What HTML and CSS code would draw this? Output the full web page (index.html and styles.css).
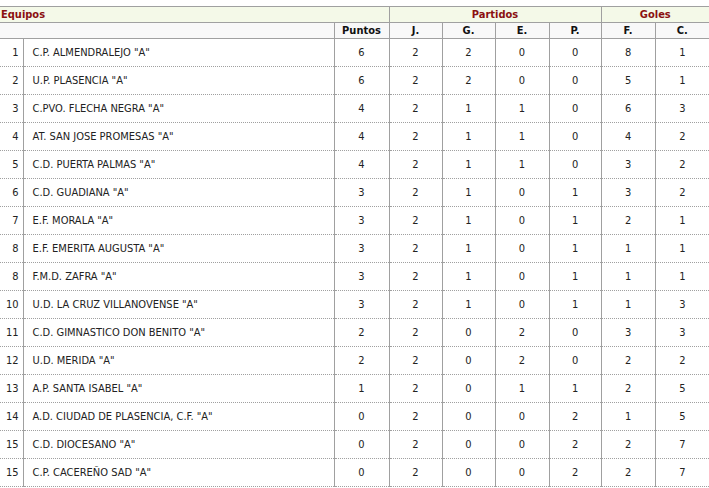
FILE: index.html
```html
<!DOCTYPE html>
<html lang="es">
<head>
<meta charset="utf-8">
<title>Clasificación</title>
<link rel="stylesheet" href="styles.css">
</head>
<body>
<table class="standings">
  <colgroup>
    <col class="c-pos"><col class="c-team"><col class="c-pts">
    <col class="c-j"><col class="c-g"><col class="c-e"><col class="c-p">
    <col class="c-f"><col class="c-c">
  </colgroup>
  <thead>
    <tr class="group-row">
      <th colspan="3" class="group left">Equipos</th>
      <th colspan="4" class="group">Partidos</th>
      <th colspan="2" class="group">Goles</th>
    </tr>
    <tr class="label-row">
      <th colspan="2" class="blank"></th>
      <th>Puntos</th><th>J.</th><th>G.</th><th>E.</th><th>P.</th><th>F.</th><th>C.</th>
    </tr>
  </thead>
  <tbody>
    <tr><td class="pos">1</td><td class="team">C.P. ALMENDRALEJO "A"</td><td>6</td><td>2</td><td>2</td><td>0</td><td>0</td><td>8</td><td>1</td></tr>
    <tr><td class="pos">2</td><td class="team">U.P. PLASENCIA "A"</td><td>6</td><td>2</td><td>2</td><td>0</td><td>0</td><td>5</td><td>1</td></tr>
    <tr><td class="pos">3</td><td class="team">C.PVO. FLECHA NEGRA "A"</td><td>4</td><td>2</td><td>1</td><td>1</td><td>0</td><td>6</td><td>3</td></tr>
    <tr><td class="pos">4</td><td class="team">AT. SAN JOSE PROMESAS "A"</td><td>4</td><td>2</td><td>1</td><td>1</td><td>0</td><td>4</td><td>2</td></tr>
    <tr><td class="pos">5</td><td class="team">C.D. PUERTA PALMAS "A"</td><td>4</td><td>2</td><td>1</td><td>1</td><td>0</td><td>3</td><td>2</td></tr>
    <tr><td class="pos">6</td><td class="team">C.D. GUADIANA "A"</td><td>3</td><td>2</td><td>1</td><td>0</td><td>1</td><td>3</td><td>2</td></tr>
    <tr><td class="pos">7</td><td class="team">E.F. MORALA "A"</td><td>3</td><td>2</td><td>1</td><td>0</td><td>1</td><td>2</td><td>1</td></tr>
    <tr><td class="pos">8</td><td class="team">E.F. EMERITA AUGUSTA "A"</td><td>3</td><td>2</td><td>1</td><td>0</td><td>1</td><td>1</td><td>1</td></tr>
    <tr><td class="pos">8</td><td class="team">F.M.D. ZAFRA "A"</td><td>3</td><td>2</td><td>1</td><td>0</td><td>1</td><td>1</td><td>1</td></tr>
    <tr><td class="pos">10</td><td class="team">U.D. LA CRUZ VILLANOVENSE "A"</td><td>3</td><td>2</td><td>1</td><td>0</td><td>1</td><td>1</td><td>3</td></tr>
    <tr><td class="pos">11</td><td class="team">C.D. GIMNASTICO DON BENITO "A"</td><td>2</td><td>2</td><td>0</td><td>2</td><td>0</td><td>3</td><td>3</td></tr>
    <tr><td class="pos">12</td><td class="team">U.D. MERIDA "A"</td><td>2</td><td>2</td><td>0</td><td>2</td><td>0</td><td>2</td><td>2</td></tr>
    <tr><td class="pos">13</td><td class="team">A.P. SANTA ISABEL "A"</td><td>1</td><td>2</td><td>0</td><td>1</td><td>1</td><td>2</td><td>5</td></tr>
    <tr><td class="pos">14</td><td class="team">A.D. CIUDAD DE PLASENCIA, C.F. "A"</td><td>0</td><td>2</td><td>0</td><td>0</td><td>2</td><td>1</td><td>5</td></tr>
    <tr><td class="pos">15</td><td class="team">C.D. DIOCESANO "A"</td><td>0</td><td>2</td><td>0</td><td>0</td><td>2</td><td>2</td><td>7</td></tr>
    <tr><td class="pos">15</td><td class="team">C.P. CACEREÑO SAD "A"</td><td>0</td><td>2</td><td>0</td><td>0</td><td>2</td><td>2</td><td>7</td></tr>
  </tbody>
</table>
</body>
</html>
```
FILE: styles.css
```css
html, body {
  margin: 0;
  padding: 0;
  background: #ffffff;
}
body {
  padding-top: 6px;
  font-family: "DejaVu Sans Condensed", "DejaVu Sans", "Liberation Sans", sans-serif;
  font-size: 11px;
  color: #222222;
}
.standings {
  border-collapse: collapse;
  table-layout: fixed;
  width: 709px;
}
.c-pos { width: 23px; }
.c-team { width: 311px; }
.c-pts { width: 55px; }
.c-j { width: 53px; }
.c-g { width: 53px; }
.c-e { width: 54px; }
.c-p { width: 52px; }
.c-f { width: 54px; }
.c-c { width: 54px; }

.standings th, .standings td {
  padding: 0;
  text-align: center;
  white-space: nowrap;
  overflow: hidden;
}
.group-row th {
  height: 15px;
  background: #f4f9e8;
  color: #8b1010;
  font-weight: bold;
  border-top: 1px solid #a0a0a0;
  border-left: 1px solid #a0a0a0;
  border-bottom: 1px solid #a0a0a0;
}
.group-row th.left {
  text-align: left;
  padding-left: 1px;
  border-left: none;
}
.label-row th {
  height: 15px;
  background: #f8f8f8;
  color: #111111;
  font-weight: bold;
  border-left: 1px solid #a0a0a0;
  border-bottom: 1px solid #a0a0a0;
}
.label-row th.blank {
  border-left: none;
}
.standings td {
  height: 27px;
  border-left: 1px solid #a0a0a0;
  border-bottom: 1px dotted #a0a0a0;
}
.standings td.pos {
  border-left: none;
  text-align: right;
  padding-right: 4px;
}
.standings td.team {
  text-align: left;
  padding-left: 9px;
}
```
